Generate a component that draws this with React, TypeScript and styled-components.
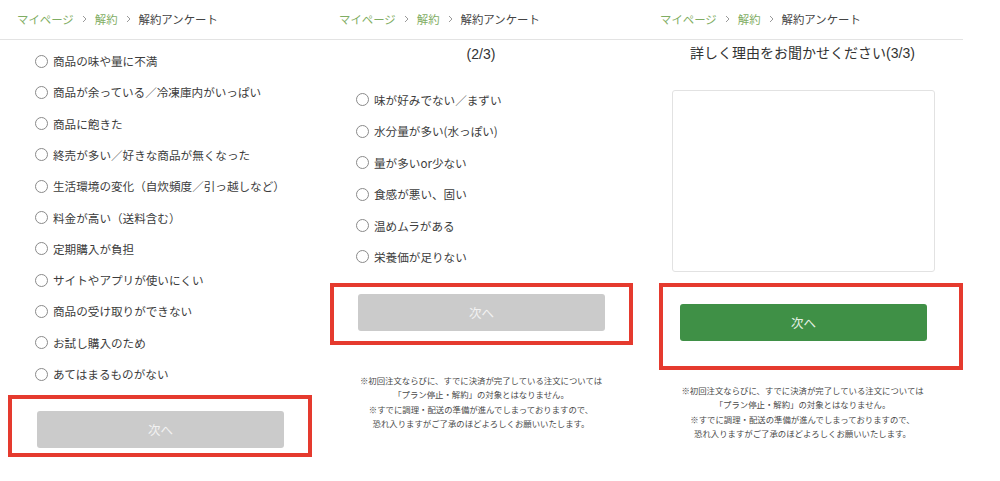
import React from "react";
import styled, { createGlobalStyle } from "styled-components";

const Global = createGlobalStyle`
  html, body { margin: 0; padding: 0; background: #fff; }
  body { font-family: "Liberation Sans", "Noto Sans CJK JP", sans-serif; }
`;

const Page = styled.div`
  display: grid;
  grid-template-columns: 320px 322px 321px 37px;
  width: 1000px;
  height: 481px;
  overflow: hidden;
  background: #fff;
`;

const Panel = styled.section`
  display: flex;
  flex-direction: column;
  align-items: flex-start;
`;

const Header = styled.nav<{ $left: number }>`
  box-sizing: border-box;
  width: 100%;
  height: 40px;
  padding-left: ${(p) => p.$left}px;
  padding-bottom: 1px;
  border-bottom: 1px solid #e3e3e3;
  display: flex;
  align-items: center;
  font-family: "Noto Sans CJK JP", sans-serif;
  font-size: 11.4px;
  color: #444;
`;

const Crumb = styled.span<{ $link?: boolean }>`
  color: ${(p) => (p.$link ? "#7fad63" : "#444")};
`;

const Sep = styled.svg`
  width: 5px;
  height: 8px;
  margin: 0 8px;
`;

const Title = styled.h2<{ $lh: number }>`
  margin: 0;
  width: 100%;
  text-align: center;
  font-weight: normal;
  font-size: 14px;
  line-height: ${(p) => p.$lh}px;
  color: #333;
  font-family: "Liberation Sans", "Noto Sans CJK JP", sans-serif;
`;

const Options = styled.ul<{ $left: number; $top: number; $row: number }>`
  list-style: none;
  margin: ${(p) => p.$top}px 0 0 ${(p) => p.$left}px;
  padding: 0;
  li {
    height: ${(p) => p.$row}px;
  }
`;

const Option = styled.li`
  display: flex;
  align-items: center;
  font-family: "Noto Sans CJK JP", sans-serif;
  font-size: 11.6px;
  color: #3c3c3c;
  white-space: nowrap;
`;

const Radio = styled.span`
  box-sizing: border-box;
  width: 13px;
  height: 13px;
  border-radius: 50%;
  border: 1px solid #8a8a8a;
  background: #fff;
  margin-right: 5px;
  flex: none;
`;

const Frame = styled.div<{ $top: number; $left: number; $w: number; $h: number; $pt: number; $pl: number }>`
  box-sizing: border-box;
  margin: ${(p) => p.$top}px 0 0 ${(p) => p.$left}px;
  width: ${(p) => p.$w}px;
  height: ${(p) => p.$h}px;
  border: 4px solid #e53a2e;
  padding: ${(p) => p.$pt}px 0 0 ${(p) => p.$pl}px;
`;

const NextButton = styled.button<{ $active?: boolean }>`
  display: block;
  width: 247px;
  height: 37px;
  border: none;
  border-radius: 3px;
  background: ${(p) => (p.$active ? "#3f9046" : "#cbcbcb")};
  color: ${(p) => (p.$active ? "#e4f0e4" : "#f2f2f2")};
  font-family: "Noto Sans CJK JP", sans-serif;
  font-size: 12.5px;
  padding: 0;
  cursor: pointer;
`;

const TextArea = styled.textarea`
  box-sizing: border-box;
  margin: 24px 0 0 30px;
  width: 263px;
  height: 182px;
  border: 1px solid #e2e2e2;
  border-radius: 3px;
  resize: none;
  background: #fff;
`;

const Notes = styled.p<{ $top: number }>`
  margin: ${(p) => p.$top}px 0 0;
  width: 100%;
  text-align: center;
  font-family: "Noto Sans CJK JP", sans-serif;
  font-size: 8.4px;
  line-height: 14.6px;
  color: #4a4a4a;
  white-space: nowrap;
`;

const Chevron = () => (
  <Sep viewBox="0 0 5 8">
    <path d="M1 1 L4 4 L1 7" fill="none" stroke="#9a9a9a" strokeWidth="1" />
  </Sep>
);

const Breadcrumb = ({ left }: { left: number }) => (
  <Header $left={left}>
    <Crumb $link>マイページ</Crumb>
    <Chevron />
    <Crumb $link>解約</Crumb>
    <Chevron />
    <Crumb>解約アンケート</Crumb>
  </Header>
);

const NoteText = ({ top }: { top: number }) => (
  <Notes $top={top}>
    ※初回注文ならびに、すでに決済が完了している注文については
    <br />
    「プラン停止・解約」の対象とはなりません。
    <br />
    ※すでに調理・配送の準備が進んでしまっておりますので、
    <br />
    恐れ入りますがご了承のほどよろしくお願いいたします。
  </Notes>
);

const reasons1 = [
  "商品の味や量に不満",
  "商品が余っている／冷凍庫内がいっぱい",
  "商品に飽きた",
  "終売が多い／好きな商品が無くなった",
  "生活環境の変化（自炊頻度／引っ越しなど）",
  "料金が高い（送料含む）",
  "定期購入が負担",
  "サイトやアプリが使いにくい",
  "商品の受け取りができない",
  "お試し購入のため",
  "あてはまるものがない",
];

const reasons2 = [
  "味が好みでない／まずい",
  "水分量が多い(水っぽい)",
  "量が多いor少ない",
  "食感が悪い、固い",
  "温めムラがある",
  "栄養価が足りない",
];

export default function App() {
  return (
    <>
      <Global />
      <Page>
        <Panel>
          <Breadcrumb left={17} />
          <Options $left={35} $top={5.4} $row={31.3}>
            {reasons1.map((r) => (
              <Option key={r}>
                <Radio />
                {r}
              </Option>
            ))}
          </Options>
          <Frame $top={5} $left={8} $w={304} $h={62} $pt={12} $pl={25}>
            <NextButton>次へ</NextButton>
          </Frame>
        </Panel>

        <Panel>
          <Breadcrumb left={19} />
          <Title $lh={28}>(2/3)</Title>
          <Options $left={36} $top={16.3} $row={31.4}>
            {reasons2.map((r) => (
              <Option key={r}>
                <Radio />
                {r}
              </Option>
            ))}
          </Options>
          <Frame $top={10.3} $left={10} $w={303} $h={62} $pt={7} $pl={24}>
            <NextButton>次へ</NextButton>
          </Frame>
          <NoteText top={27.7} />
        </Panel>

        <Panel>
          <Breadcrumb left={18} />
          <Title $lh={26}>詳しく理由をお聞かせください(3/3)</Title>
          <TextArea />
          <Frame $top={11} $left={17} $w={304} $h={87} $pt={17} $pl={17}>
            <NextButton $active>次へ</NextButton>
          </Frame>
          <NoteText top={12.7} />
        </Panel>
        <div />
      </Page>
    </>
  );
}
